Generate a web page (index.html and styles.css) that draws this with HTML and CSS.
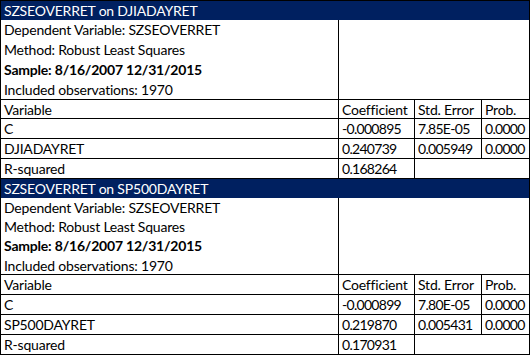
FILE: index.html
```html
<!DOCTYPE html>
<html>
<head>
<meta charset="utf-8">
<link rel="stylesheet" href="styles.css">
</head>
<body>
<div class="sheet">
  <div class="cell head">SZSEOVERRET on DJIADAYRET</div>
  <div class="cell info">
    <div class="line">Dependent Variable: SZSEOVERRET</div>
    <div class="line">Method: Robust Least Squares</div>
    <div class="line bold">Sample: 8/16/2007 12/31/2015</div>
    <div class="line">Included observations: 1970</div>
  </div>
  <div class="cell blank"></div>
  <div class="cell r1">Variable</div><div class="cell r1">Coefficient</div><div class="cell r1">Std. Error</div><div class="cell r1">Prob.</div>
  <div class="cell">C</div><div class="cell num">-0.000895</div><div class="cell num">7.85E-05</div><div class="cell num">0.0000</div>
  <div class="cell">DJIADAYRET</div><div class="cell num">0.240739</div><div class="cell num">0.005949</div><div class="cell num">0.0000</div>
  <div class="cell">R-squared</div><div class="cell num">0.168264</div><div class="cell span2"></div>
</div>
<div class="sheet second">
  <div class="cell head">SZSEOVERRET on SP500DAYRET</div>
  <div class="cell info">
    <div class="line">Dependent Variable: SZSEOVERRET</div>
    <div class="line">Method: Robust Least Squares</div>
    <div class="line bold">Sample: 8/16/2007 12/31/2015</div>
    <div class="line">Included observations: 1970</div>
  </div>
  <div class="cell blank"></div>
  <div class="cell r1">Variable</div><div class="cell r1">Coefficient</div><div class="cell r1">Std. Error</div><div class="cell r1">Prob.</div>
  <div class="cell">C</div><div class="cell num">-0.000899</div><div class="cell num">7.80E-05</div><div class="cell num">0.0000</div>
  <div class="cell">SP500DAYRET</div><div class="cell num">0.219870</div><div class="cell num">0.005431</div><div class="cell num">0.0000</div>
  <div class="cell">R-squared</div><div class="cell num">0.170931</div><div class="cell span2"></div>
</div>
</body>
</html>
```
FILE: styles.css
```css
html, body {
  margin: 0;
  padding: 0;
  background: #fff;
}
.sheet {
  display: grid;
  grid-template-columns: 338px 76px 67px 48px;
  width: max-content;
  border-left: 1px solid #000;
  border-top: 1px solid #000;
  font-family: Lato, "Open Sans", sans-serif;
  font-size: 14px;
  letter-spacing: -0.2px;
  color: #000;
}
.sheet.second {
  border-top: none;
}
.cell {
  box-sizing: border-box;
  height: 20px;
  line-height: 19px;
  padding-left: 3px;
  border-right: 1px solid #000;
  border-bottom: 1px solid #000;
  white-space: nowrap;
  overflow: hidden;
}
.num {
  letter-spacing: -0.7px;
}
.head {
  grid-column: 1 / 5;
  height: 19px;
  background: #002060;
  color: #fff;
  border-bottom: none;
}
.info {
  height: 80px;
  padding-left: 3px;
}
.line {
  height: 20px;
  line-height: 20px;
}
.line:last-child {
  height: 19px;
  line-height: 19px;
}
.second .info,
.second .blank {
  height: 77px;
}
.second .line {
  height: 19px;
  line-height: 19px;
}
.second .line:nth-child(3) {
  height: 20px;
  line-height: 20px;
}
.bold {
  font-weight: 700;
}
.blank {
  grid-column: 2 / 5;
  height: 80px;
}
.r1 {
  height: 19px;
  line-height: 19px;
}
.second .r1 {
  height: 20px;
  line-height: 20px;
}
.span2 {
  grid-column: 3 / 5;
}
```
